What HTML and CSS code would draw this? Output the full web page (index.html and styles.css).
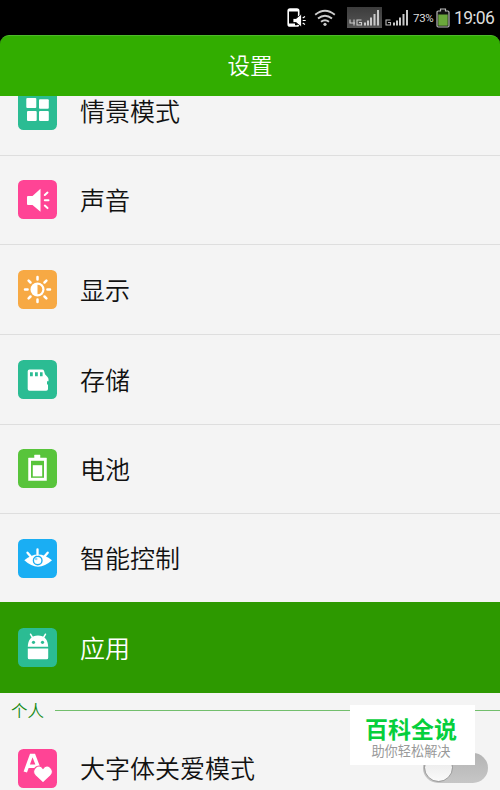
FILE: index.html
```html
<!DOCTYPE html>
<html lang="zh-CN">
<head>
<meta charset="utf-8">
<title>设置</title>
<link rel="stylesheet" href="styles.css">
</head>
<body>
<div class="screen">
  <div class="statusbar">
    <svg class="s-phone" width="20" height="20" viewBox="0 0 20 20">
      <rect x="2.200" y="1" width="10.500" height="17" rx="1.800" fill="none" stroke="#fff" stroke-width="1.600"/>
      <path d="M2 2.300h11M2 16.800h7" stroke="#fff" stroke-width="2.400"/>
      <path d="M7 10.500h3l5.500-4.500v13l-5.500-4.500H7z" fill="#fff" stroke="#000" stroke-width=".8"/>
      <path d="M16.700 10l2.300-1.500M16.700 12.500h3M16.700 15l2.300 1.500" stroke="#fff" stroke-width="1.200"/>
    </svg>
    <svg class="s-wifi" width="22" height="18" viewBox="0 0 22 18" fill="none" stroke="#ccc" stroke-width="1.900">
      <path d="M1.200 5.800Q11-2.200 20.800 5.800M4 9.500Q11 3.800 18 9.500M7 12.800Q11 9.500 15 12.800"/>
      <circle cx="11" cy="15.300" r="1.600" fill="#ccc" stroke="none"/>
    </svg>
    <div class="net boxed">
      <svg width="35" height="21" viewBox="0 0 35 21">
        <path d="M3 12.500v3.500h5M7 12.500v6M14.500 13H10v5h4.500v-2.500H12" fill="none" stroke="#ccc" stroke-width="1.100"/>
        <path d="M18 18.500v-3M21 18.500v-5M24 18.500v-8M27.500 18.500v-11.500M31 18.500V3" stroke="#c8c8c8" stroke-width="2"/>
      </svg>
    </div>
    <svg class="s-g" width="24" height="21" viewBox="0 0 24 21">
      <path d="M5.500 13H1v5h4.500v-2.500H3" fill="none" stroke="#bbb" stroke-width="1.100"/>
      <path d="M9 18.500v-3M12 18.500v-5M15 18.500v-8M18.500 18.500v-11.500M22 18.500V3" stroke="#c8c8c8" stroke-width="2"/>
    </svg>
    <span class="pct">73%</span>
    <svg class="s-bat" width="14" height="20" viewBox="0 0 14 20">
      <path d="M4.500 1h5v2h2.300q1.200 0 1.200 1.200v13.600q0 1.200-1.200 1.200H2.200Q1 19 1 17.800V4.200Q1 3 2.200 3h2.300z" fill="#111" stroke="#bbb" stroke-width="1.200"/>
      <rect x="2.300" y="6.500" width="9.400" height="11.200" fill="#6aa73b"/>
    </svg>
    <span class="clock">19:06</span>
  </div>

  <header class="header">设置</header>

  <main class="list">
    <div class="row r-first">
      <svg class="icon" viewBox="0 0 39 39"><rect width="39" height="39" rx="5.500" fill="#2bbc93"/>
        <g fill="#fff"><rect x="8.300" y="7" width="10" height="10" rx="1"/><rect x="21" y="8.200" width="9.800" height="9.500" rx="1"/><rect x="9" y="20" width="9.700" height="10" rx="1"/><rect x="21" y="20" width="9.800" height="10" rx="1"/></g></svg>
      <span class="label">情景模式</span>
    </div>
    <div class="row short">
      <svg class="icon" viewBox="0 0 39 39"><rect width="39" height="39" rx="5.500" fill="#ff4495"/>
        <path d="M10 16h4.500l8-7.200v23L14.500 25H10q-1 0-1-1v-7q0-1 1-1z" fill="#fff"/>
        <path d="M26.800 15l2.700-2.400M26.800 20.300h3.700M26.800 25.600l2.700 2.500" stroke="#fff" stroke-width="2" stroke-linecap="round"/></svg>
      <span class="label">声音</span>
    </div>
    <div class="row">
      <svg class="icon" viewBox="0 0 39 39"><rect width="39" height="39" rx="5.500" fill="#f7a944"/>
        <circle cx="19.500" cy="19.500" r="7" fill="#fff"/>
        <path d="M19.500 14.700a4.800 4.800 0 0 1 0 9.600z" fill="#f7a944"/>
        <path d="M19.500 7v2.600M19.500 29.400V32M7 19.500h2.600M29.400 19.500H32M10.600 10.600l1.900 1.900M26.500 26.500l1.900 1.900M10.600 28.400l1.900-1.900M26.500 12.500l1.900-1.900" stroke="#fff" stroke-width="2.500" stroke-linecap="round"/></svg>
      <span class="label">显示</span>
    </div>
    <div class="row">
      <svg class="icon" viewBox="0 0 39 39"><rect width="39" height="39" rx="5.500" fill="#2bbc93"/>
        <path d="M11.500 9.500H24q1.500 0 2 1.300l1 3.500 2.300 2.500q1.200 1.200 1.200 2.500v2h-1.500v3.200H30V29q0 1.800-1.800 1.800H11.500q-1.800 0-1.800-1.800V11.300q0-1.800 1.800-1.800z" fill="#fff"/>
        <path d="M12 12.200h2.800v4H12zM17 12.200h2.800v4H17zM22 12.200h2.600v4H22z" fill="#2bbc93"/></svg>
      <span class="label">存储</span>
    </div>
    <div class="row short">
      <svg class="icon" viewBox="0 0 39 39"><rect width="39" height="39" rx="5.500" fill="#58c43b"/>
        <path d="M16.500 6h5.500v3h6.500v22.500H10.500V9h6z" fill="#fff" stroke="#fff" stroke-width=".5" stroke-linejoin="round"/>
        <rect x="13" y="11.800" width="13" height="17" fill="#58c43b"/>
        <rect x="14.800" y="16.200" width="9.400" height="11.200" fill="#fff"/></svg>
      <span class="label">电池</span>
    </div>
    <div class="row last">
      <svg class="icon" viewBox="0 0 39 39"><rect width="39" height="39" rx="5.500" fill="#1aaef3"/>
        <path d="M6.300 21.300Q20 9.500 34 21.300Q20 34 6.300 21.300z" fill="#fff"/>
        <circle cx="19.700" cy="21.500" r="4.300" fill="#fff" stroke="#1aaef3" stroke-width="1.400"/>
        <circle cx="18.200" cy="20" r="1.300" fill="#1aaef3" opacity=".5"/>
        <path d="M19.500 10.500v5M9.500 13.700l3 3.600M29.700 13.700l-3 3.600" stroke="#fff" stroke-width="2.300" stroke-linecap="round"/></svg>
      <span class="label">智能控制</span>
    </div>
    <div class="row active">
      <svg class="icon" viewBox="0 0 39 39"><rect width="39" height="39" rx="5.500" fill="#2bbc93"/>
        <path d="M14.500 9.500l-2-3.300M25.500 9.500l2-3.300" fill="none" stroke="#fff" stroke-width="1.500" stroke-linecap="round"/>
        <path d="M9.800 18.800C10 11.500 13.500 7.500 20 7.500s10 4 10.200 11.300zM9.800 20.500h20.400v9.300q0 1.500-1.500 1.500H11.300q-1.500 0-1.500-1.500z" fill="#fff"/>
        <circle cx="15.500" cy="14.300" r="1.600" fill="#2bbc93"/><circle cx="24.500" cy="14.300" r="1.600" fill="#2bbc93"/></svg>
      <span class="label">应用</span>
    </div>
    <div class="section"><span class="section-name">个人</span><i class="rule"></i></div>
    <div class="row last">
      <svg class="icon" viewBox="0 0 39 39"><rect width="39" height="39" rx="5.500" fill="#ff4495"/>
        <path d="M7.300 23l6-16.500h2.500L21 20M9.500 17.300h8.500" fill="none" stroke="#fff" stroke-width="3.600"/>
        <path d="M25 34l-7.500-7c-5.500-6 3-14 7.500-7.700 4.500-6.300 13 1.700 7.500 7.700z" fill="#fff" stroke="#ff4495" stroke-width="1.200"/></svg>
      <span class="label">大字体关爱模式</span>
      <div class="switch"><div class="knob"></div></div>
    </div>
  </main>

  <div class="badge">
    <div class="badge-title">百科全说</div>
    <div class="badge-sub">助你轻松解决</div>
  </div>
</div>
</body>
</html>
```
FILE: styles.css
```css
* { box-sizing: border-box; }
body { margin: 0; background: #000; }
.screen {
  position: relative;
  width: 500px;
  height: 790px;
  overflow: hidden;
  display: flex;
  flex-direction: column;
  background: #000;
  font-family: Roboto, "Noto Sans CJK SC", sans-serif;
}
.statusbar {
  flex: none;
  display: flex;
  align-items: center;
  height: 35px;
  padding-left: 286px;
  color: #ddd;
  white-space: nowrap;
}
.statusbar svg { display: block; flex: none; }
.s-wifi { margin-left: 8px; }
.net.boxed {
  margin-left: 11px;
  background: linear-gradient(#3c3c3c, #555);
}
.s-g { margin-left: 3px; }
.pct { width: 22px; margin-left: 4px; font-size: 11.5px; letter-spacing: -.3px; }
.s-bat { margin-left: 1px; margin-right: 4px; }
.clock { font-size: 17.5px; letter-spacing: -.7px; }
.header {
  flex: none;
  height: 61px;
  border-radius: 9px 9px 0 0;
  border-top: 1px solid #4dbb2a;
  background: #32ad00;
  color: #fff;
  font-size: 22.5px;
  font-weight: 350;
  line-height: 60px;
  text-align: center;
}
.list { flex: 1; overflow: hidden; background: #f4f4f4; }
.row {
  display: flex;
  align-items: center;
  height: 90px;
  padding: 0 12px 0 18px;
  box-shadow: inset 0 -1px #dedede;
}
.r-first { margin-top: -30px; }
.short { height: 89px; }
.last { height: 88px; box-shadow: none; }
.active { height: 91px; background: #2d9900; box-shadow: none; }
.icon { flex: none; width: 39px; height: 39px; margin-bottom: 2px; }
.last .icon, .active .icon { margin-bottom: 0; }
.label {
  margin-left: 23px;
  padding-top: 3px;
  font-size: 25px;
  font-weight: 350;
  line-height: 36px;
  color: #111;
  white-space: nowrap;
}
.last .label, .active .label { padding-top: 4px; }
.active .label { color: #fff; }
.section {
  display: flex;
  align-items: center;
  height: 35px;
  padding-left: 11px;
  color: #168a16;
  font-size: 16.5px;
  font-weight: 350;
}
.section-name { padding-bottom: 2px; }
.rule { flex: 1; height: 1px; margin-left: 11px; background: #72be6c; }
.section + .row { height: 80px; }
.switch {
  width: 65px;
  height: 30px;
  margin-left: auto;
  border-radius: 15px;
  background: linear-gradient(#b4b4b4, #c6c6c6);
}
.knob {
  width: 29px;
  height: 29px;
  margin-left: 1px;
  border: 1px solid #999;
  border-radius: 50%;
  background: linear-gradient(#e6e6e6, #fafafa);
}
.badge {
  position: absolute;
  left: 350px;
  top: 705px;
  width: 125px;
  height: 60px;
  padding-top: 10px;
  background: #fff;
  text-align: center;
  white-space: nowrap;
}
.badge-title { padding-right: 3px; font-size: 23px; line-height: 31px; font-weight: 700; color: #06cf3c; }
.badge-sub { padding-right: 3px; font-size: 13.2px; line-height: 12px; color: #999; }
```
